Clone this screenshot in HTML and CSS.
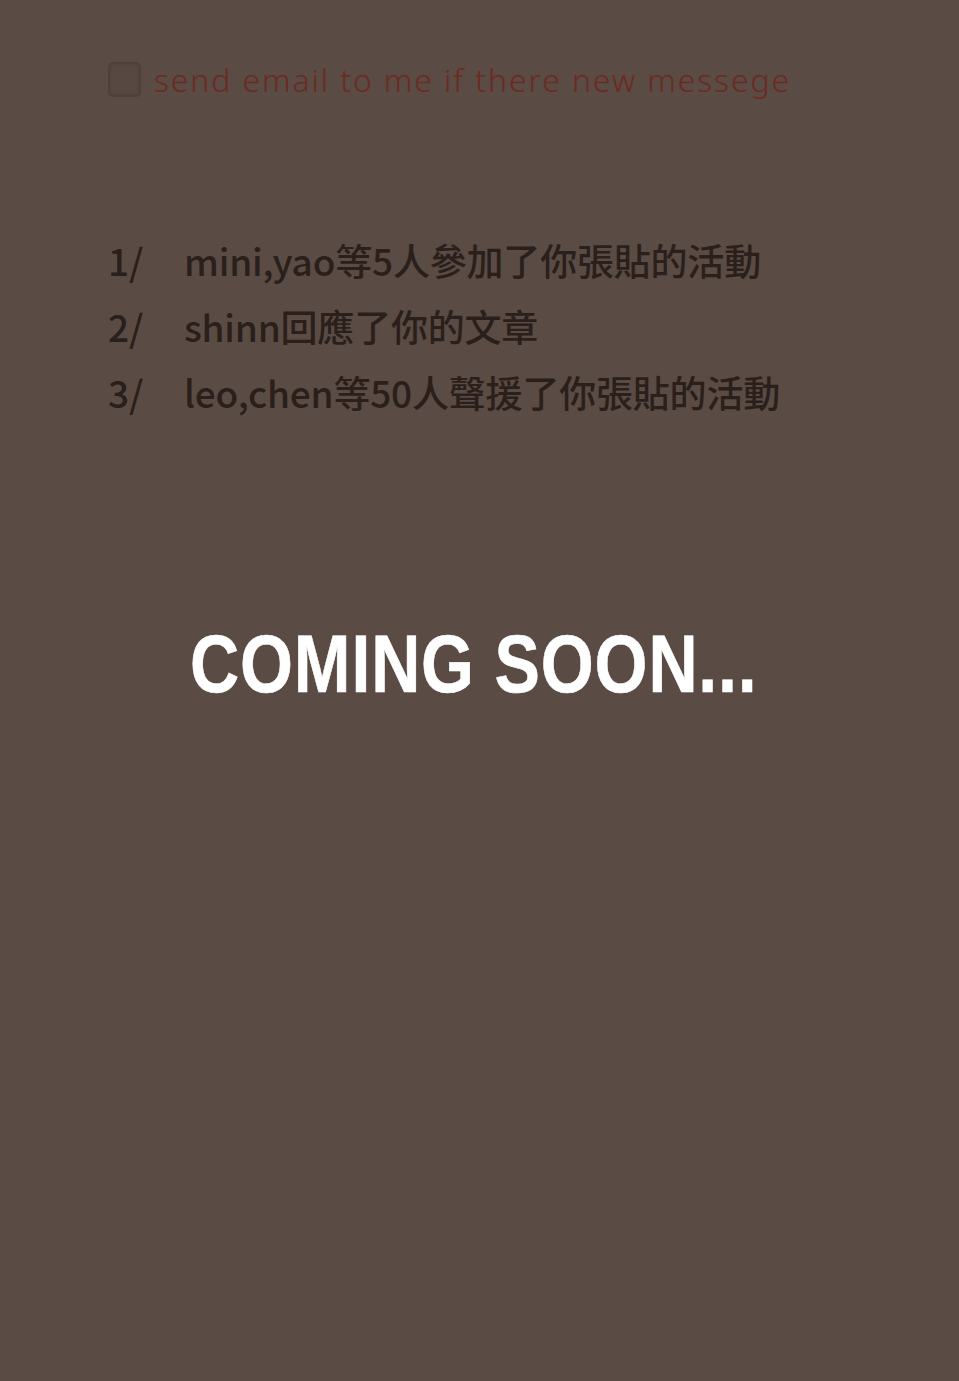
FILE: index.html
```html
<!DOCTYPE html>
<html lang="zh-Hant">
<head>
<meta charset="utf-8">
<title>Notifications</title>
<link rel="stylesheet" href="styles.css">
</head>
<body>
<main class="page">
  <label class="email-opt">
    <span class="check"></span>
    <span class="email-text">send email to me if there new messege</span>
  </label>
  <ol class="notices">
    <li><span class="num">1/</span><span class="msg">mini,yao等5人參加了你張貼的活動</span></li>
    <li><span class="num">2/</span><span class="msg">shinn回應了你的文章</span></li>
    <li><span class="num">3/</span><span class="msg">leo,chen等50人聲援了你張貼的活動</span></li>
  </ol>
  <div class="soon-wrap">
    <h1 class="soon">COMING SOON...</h1>
  </div>
</main>
</body>
</html>
```
FILE: styles.css
```css
html, body {
  margin: 0;
  padding: 0;
  background: #5a4b44;
}
.page {
  width: 959px;
  height: 1381px;
  box-sizing: border-box;
  padding: 62px 0 0 108px;
}
.email-opt {
  display: flex;
  align-items: center;
  gap: 13px;
  height: 35px;
}
.check {
  width: 29px;
  height: 31px;
  border: 2px solid #4e403a;
  border-radius: 5px;
  background: #574842;
  box-shadow: inset 0 0 3px rgba(0,0,0,0.15);
}
.email-text {
  font-family: "Noto Sans", "Liberation Sans", sans-serif;
  font-weight: 300;
  font-size: 32px;
  letter-spacing: 1.85px;
  color: #6c2a22;
  line-height: 35px;
}
.notices {
  list-style: none;
  margin: 130px 0 0 0;
  padding: 0;
}
.notices li {
  display: flex;
  height: 66px;
  align-items: center;
  font-family: "Noto Sans CJK TC", "Noto Sans", sans-serif;
  font-weight: 500;
  font-size: 37px;
  letter-spacing: -0.2px;
  color: #2a1f1b;
}
.num {
  width: 76px;
  letter-spacing: 0;
}
.soon-wrap {
  margin: 194px 0 0 -108px;
  display: flex;
  justify-content: center;
  padding-right: 11px;
}
.soon {
  margin: 0;
  font-family: "Liberation Sans", sans-serif;
  font-weight: 700;
  font-size: 82px;
  letter-spacing: 1px;
  color: #ffffff;
  line-height: 90px;
  transform: scaleX(0.83);
  -webkit-text-stroke: 0.6px #ffffff;
}
```
